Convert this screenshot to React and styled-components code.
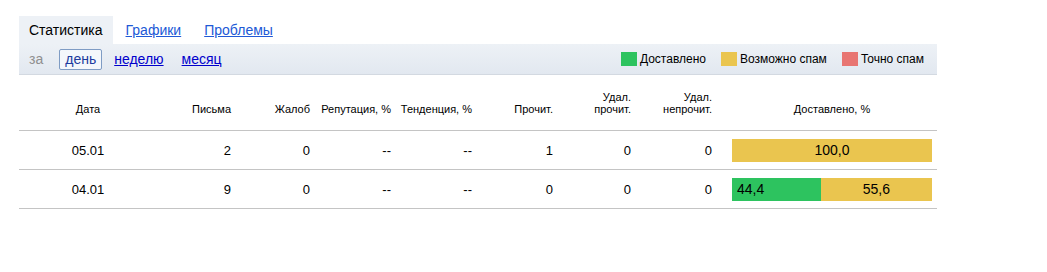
import styled, { createGlobalStyle } from "styled-components";

const GlobalStyle = createGlobalStyle`
  body {
    margin: 0;
    background: #fff;
    font-family: Arial, "Liberation Sans", sans-serif;
    color: #000;
  }
`;

const Page = styled.div`
  padding: 16px 0 0 19px;
  width: 918px;
`;

const Tabs = styled.div`
  display: flex;
  height: 28px;
`;

const Tab = styled.a`
  display: flex;
  align-items: center;
  padding: 0 ${(p) => (p.$active ? "10px" : "0")};
  margin-right: ${(p) => (p.$active ? "13px" : "23px")};
  font-size: 14px;
  background: ${(p) => (p.$active ? "#edf1f6" : "transparent")};
  color: ${(p) => (p.$active ? "#000" : "#2159d6")};
  text-decoration: ${(p) => (p.$active ? "none" : "underline")};
  cursor: pointer;
`;

const Toolbar = styled.div`
  display: flex;
  align-items: center;
  height: 30px;
  padding: 0 13px 0 10px;
  background: linear-gradient(#edf1f6, #e2e8f0);
  border-bottom: 1px solid #d3d9e1;
`;

const Label = styled.span`
  color: #8f8f8f;
  font-size: 14px;
  margin-right: 16px;
`;

const Period = styled.a`
  font-size: 14px;
  color: ${(p) => (p.$active ? "#1d3b9e" : "#0000cc")};
  text-decoration: ${(p) => (p.$active ? "none" : "underline")};
  padding: ${(p) => (p.$active ? "1px 5px 2px" : "0")};
  border: ${(p) => (p.$active ? "1px solid #7f9cc4" : "none")};
  border-radius: 2px;
  background: ${(p) => (p.$active ? "#f4f7fb" : "transparent")};
  margin-right: ${(p) => (p.$active ? "12px" : "18px")};
  cursor: pointer;
`;

const Legend = styled.div`
  margin-left: auto;
  display: flex;
  align-items: center;
  gap: 15px;
`;

const LegendItem = styled.span`
  display: flex;
  align-items: center;
  gap: 3px;
  font-size: 12px;
`;

const Swatch = styled.span`
  width: 16px;
  height: 14px;
  background: ${(p) => p.$color};
`;

const Row = styled.div`
  display: grid;
  grid-template-columns: 138px 79px 79px 81px 81px 81px 78px 81px 220px;
  border-bottom: 1px solid #c4c4c4;
`;

const HeadRow = styled(Row)`
  height: 55px;
`;

const BodyRow = styled(Row)`
  height: 38px;
`;

const HeadCell = styled.div`
  display: flex;
  align-items: flex-end;
  justify-content: ${(p) => (p.$center ? "center" : "flex-end")};
  text-align: ${(p) => (p.$center ? "center" : "right")};
  padding: 0 5px 15px ${(p) => (p.$wide ? "15px" : "5px")};
  font-size: 11px;
  line-height: 12px;
  white-space: nowrap;
`;

const Cell = styled.div`
  display: flex;
  align-items: center;
  justify-content: ${(p) => (p.$center ? "center" : "flex-end")};
  padding: 0 5px;
  font-size: 13px;
`;

const BarCell = styled.div`
  display: flex;
  align-items: center;
  padding: 0 5px 0 15px;
`;

const Bar = styled.div`
  display: flex;
  width: 200px;
  height: 23px;
`;

const Segment = styled.div`
  display: flex;
  align-items: center;
  justify-content: ${(p) => (p.$left ? "flex-start" : "center")};
  padding-left: ${(p) => (p.$left ? "5px" : "0")};
  background: ${(p) => p.$color};
  font-size: 14px;
  box-sizing: border-box;
`;

const colors = {
  delivered: "#2dc35f",
  maybe: "#eac54f",
  spam: "#e87572",
};

const rows = [
  { date: "05.01", mail: 2, complaints: 0, rep: "--", trend: "--", read: 1, delRead: 0, delUnread: 0, parts: [{ c: colors.maybe, v: 100, t: "100,0" }] },
  {
    date: "04.01", mail: 9, complaints: 0, rep: "--", trend: "--", read: 0, delRead: 0, delUnread: 0,
    parts: [
      { c: colors.delivered, v: 44.4, t: "44,4", left: true },
      { c: colors.maybe, v: 55.6, t: "55,6" },
    ],
  },
];

export default function App() {
  return (
    <Page>
      <GlobalStyle />
      <Tabs>
        <Tab $active>Статистика</Tab>
        <Tab>Графики</Tab>
        <Tab>Проблемы</Tab>
      </Tabs>
      <Toolbar>
        <Label>за</Label>
        <Period $active>день</Period>
        <Period>неделю</Period>
        <Period>месяц</Period>
        <Legend>
          <LegendItem><Swatch $color={colors.delivered} />Доставлено</LegendItem>
          <LegendItem><Swatch $color={colors.maybe} />Возможно спам</LegendItem>
          <LegendItem><Swatch $color={colors.spam} />Точно спам</LegendItem>
        </Legend>
      </Toolbar>
      <HeadRow>
        <HeadCell $center>Дата</HeadCell>
        <HeadCell>Письма</HeadCell>
        <HeadCell>Жалоб</HeadCell>
        <HeadCell>Репутация, %</HeadCell>
        <HeadCell>Тенденция, %</HeadCell>
        <HeadCell>Прочит.</HeadCell>
        <HeadCell>Удал.<br />прочит.</HeadCell>
        <HeadCell>Удал.<br />непрочит.</HeadCell>
        <HeadCell $center $wide>Доставлено, %</HeadCell>
      </HeadRow>
      {rows.map((r) => (
        <BodyRow key={r.date}>
          <Cell $center>{r.date}</Cell>
          <Cell>{r.mail}</Cell>
          <Cell>{r.complaints}</Cell>
          <Cell>{r.rep}</Cell>
          <Cell>{r.trend}</Cell>
          <Cell>{r.read}</Cell>
          <Cell>{r.delRead}</Cell>
          <Cell>{r.delUnread}</Cell>
          <BarCell>
            <Bar>
              {r.parts.map((p) => (
                <Segment key={p.t} $color={p.c} $left={p.left} style={{ width: `${p.v}%` }}>
                  {p.t}
                </Segment>
              ))}
            </Bar>
          </BarCell>
        </BodyRow>
      ))}
    </Page>
  );
}
